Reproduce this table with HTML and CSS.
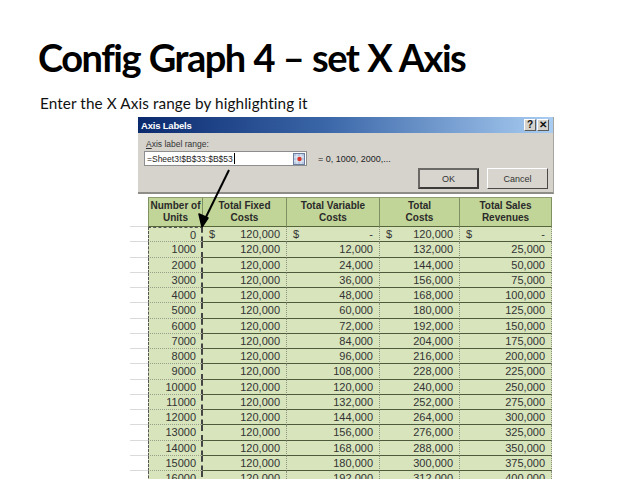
FILE: index.html
```html
<!DOCTYPE html>
<html>
<head>
<meta charset="utf-8">
<link rel="stylesheet" href="styles.css">
</head>
<body>
<div class="slide">
  <h1 class="title">Config Graph 4 – set X Axis</h1>
  <p class="sub">Enter the X Axis range by highlighting it</p>
  <div class="figure">
    <div class="dialog">
      <div class="titlebar">
        <span class="tb-text">Axis Labels</span>
        <span class="tb-btns"><span class="tb-btn">?</span><span class="tb-btn">✕</span></span>
      </div>
      <div class="dbody">
        <div class="label"><u>A</u>xis label range:</div>
        <div class="inrow">
          <div class="input"><span class="intext">=Sheet3!$B$33:$B$53</span><span class="caret"></span>
            <span class="pick"><svg width="12" height="12" viewBox="0 0 12 12"><rect x="0.5" y="0.5" width="11" height="11" fill="#b9c9e4" stroke="#6d7f9f"/><path d="M1 4h10M1 8h10M4 1v10M8 1v10" stroke="#e8eef8" stroke-width="1"/><circle cx="6.5" cy="6" r="2.2" fill="#d8352a"/></svg></span>
          </div>
          <span class="preview">= 0, 1000, 2000,...</span>
        </div>
        <div class="btnrow">
          <span class="btn default">OK</span>
          <span class="btn">Cancel</span>
        </div>
      </div>
    </div>
    <div class="sheet">
      <div class="g"></div><div class="h hf">Number of<br>Units</div><div class="h">Total Fixed<br>Costs</div><div class="h">Total Variable<br>Costs</div><div class="h">Total<br>Costs</div><div class="h">Total Sales<br>Revenues</div>
      <div class="g"></div><div class="c u first">0</div><div class="c d"><span>$</span><span>120,000</span></div><div class="c d"><span>$</span><span>-</span></div><div class="c d"><span>$</span><span>120,000</span></div><div class="c d"><span>$</span><span>-</span></div>
      <div class="g"></div><div class="c u">1000</div><div class="c">120,000</div><div class="c">12,000</div><div class="c">132,000</div><div class="c">25,000</div>
      <div class="g"></div><div class="c u">2000</div><div class="c">120,000</div><div class="c">24,000</div><div class="c">144,000</div><div class="c">50,000</div>
      <div class="g"></div><div class="c u">3000</div><div class="c">120,000</div><div class="c">36,000</div><div class="c">156,000</div><div class="c">75,000</div>
      <div class="g"></div><div class="c u">4000</div><div class="c">120,000</div><div class="c">48,000</div><div class="c">168,000</div><div class="c">100,000</div>
      <div class="g"></div><div class="c u">5000</div><div class="c">120,000</div><div class="c">60,000</div><div class="c">180,000</div><div class="c">125,000</div>
      <div class="g"></div><div class="c u">6000</div><div class="c">120,000</div><div class="c">72,000</div><div class="c">192,000</div><div class="c">150,000</div>
      <div class="g"></div><div class="c u">7000</div><div class="c">120,000</div><div class="c">84,000</div><div class="c">204,000</div><div class="c">175,000</div>
      <div class="g"></div><div class="c u">8000</div><div class="c">120,000</div><div class="c">96,000</div><div class="c">216,000</div><div class="c">200,000</div>
      <div class="g"></div><div class="c u">9000</div><div class="c">120,000</div><div class="c">108,000</div><div class="c">228,000</div><div class="c">225,000</div>
      <div class="g"></div><div class="c u">10000</div><div class="c">120,000</div><div class="c">120,000</div><div class="c">240,000</div><div class="c">250,000</div>
      <div class="g"></div><div class="c u">11000</div><div class="c">120,000</div><div class="c">132,000</div><div class="c">252,000</div><div class="c">275,000</div>
      <div class="g"></div><div class="c u">12000</div><div class="c">120,000</div><div class="c">144,000</div><div class="c">264,000</div><div class="c">300,000</div>
      <div class="g"></div><div class="c u">13000</div><div class="c">120,000</div><div class="c">156,000</div><div class="c">276,000</div><div class="c">325,000</div>
      <div class="g"></div><div class="c u">14000</div><div class="c">120,000</div><div class="c">168,000</div><div class="c">288,000</div><div class="c">350,000</div>
      <div class="g"></div><div class="c u">15000</div><div class="c">120,000</div><div class="c">180,000</div><div class="c">300,000</div><div class="c">375,000</div>
      <div class="g"></div><div class="c u">16000</div><div class="c">120,000</div><div class="c">192,000</div><div class="c">312,000</div><div class="c">400,000</div>
    </div>
    <svg class="arrow" width="120" height="120" viewBox="0 0 120 120">
      <path d="M99 53 L75 102" stroke="#000" stroke-width="2" fill="none"/>
      <path d="M72 110 L69 97 L78 101 Z" fill="#000" stroke="#000" stroke-width="1.5" stroke-linejoin="round"/>
    </svg>
  </div>
</div>
</body>
</html>
```

FILE: styles.css
```css
html, body {
  margin: 0;
  padding: 0;
  background: #fff;
}
body {
  width: 638px;
  height: 479px;
  overflow: hidden;
  font-family: Lato, "Liberation Sans", sans-serif;
}
.slide {
  display: flex;
  flex-direction: column;
}
.title {
  margin: 0;
  padding: 34px 0 0 38px;
  font-family: Lato, sans-serif;
  font-weight: 700;
  font-size: 38px;
  letter-spacing: -1.5px;
  word-spacing: 1px;
  line-height: 47px;
  color: #000;
}
.sub {
  margin: 0;
  padding: 13px 0 0 40px;
  font-size: 15.3px;
  line-height: 18px;
  letter-spacing: 0.1px;
  color: #111;
}
.figure {
  position: relative;
  margin: 5px 0 0 130px;
  width: 430px;
}
.dialog {
  margin-left: 8px;
  width: 416px;
  height: 77px;
  display: flex;
  flex-direction: column;
  background: #d6d3cd;
  box-sizing: border-box;
  border-bottom: 2px solid #8f8d88;
  border-right: 1px solid #a8a6a0;
  font-family: "Liberation Sans", sans-serif;
}
.titlebar {
  height: 16px;
  flex: none;
  display: flex;
  align-items: center;
  justify-content: space-between;
  padding: 0 4px 0 3px;
  background: linear-gradient(to right, #0b2a6e 0%, #3a66a8 45%, #a9cdf2 100%);
}
.tb-text {
  color: #fff;
  font-weight: 700;
  font-size: 9.5px;
  letter-spacing: -0.2px;
}
.tb-btns {
  display: flex;
  gap: 1px;
}
.tb-btn {
  width: 12px;
  height: 12px;
  box-sizing: border-box;
  background: #d6d3cd;
  border: 1px solid #fff;
  border-right-color: #5e5c58;
  border-bottom-color: #5e5c58;
  font-size: 10px;
  line-height: 10px;
  font-weight: 700;
  text-align: center;
  color: #111;
}
.dbody {
  flex: 1;
  display: flex;
  flex-direction: column;
  padding: 5px 5px 0 6px;
}
.label {
  font-size: 8.5px;
  line-height: 12px;
  color: #333;
  padding-left: 2px;
}
.inrow {
  margin-top: 1px;
  display: flex;
  align-items: center;
  gap: 11px;
}
.input {
  width: 163px;
  height: 15px;
  box-sizing: border-box;
  background: #fff;
  border: 1px solid #8e8e8e;
  display: flex;
  align-items: center;
  padding-left: 2px;
  font-size: 8.5px;
  color: #222;
}
.caret {
  width: 1px;
  height: 11px;
  background: #000;
  margin-left: 1px;
}
.pick {
  margin-left: auto;
  margin-right: 1px;
  display: flex;
}
.preview {
  font-size: 9px;
  color: #222;
}
.btnrow {
  margin-top: 2px;
  display: flex;
  justify-content: flex-end;
  gap: 8px;
}
.btn {
  width: 61px;
  height: 21px;
  box-sizing: border-box;
  border: 1px solid #fff;
  border-right-color: #4a4846;
  border-bottom-color: #4a4846;
  background: #d8d5cf;
  font-size: 9px;
  color: #333;
  display: flex;
  align-items: center;
  justify-content: center;
}
.btn.default {
  border: 2px solid #3c3b39;
  border-top-color: #6a6965;
  border-left-color: #6a6965;
}
.sheet {
  margin-top: 3px;
  display: grid;
  grid-template-columns: 18px 55px 84px 93px 80px 92px;
  grid-template-rows: 30px;
  grid-auto-rows: 15.27px;
  font-family: "Liberation Sans", Arial, sans-serif;
}
.g {
  border-bottom: 1px solid #dadada;
}
.h {
  background: #c2d598;
  border-top: 1px solid #8e9e72;
  border-right: 1px solid #7f9062;
  border-bottom: 1px solid #56663a;
  font-size: 10px;
  font-weight: 700;
  line-height: 12px;
  color: #2a2a2a;
  text-align: center;
  display: flex;
  align-items: center;
  justify-content: center;
}
.h.hf {
  border-left: 1px solid #7f9062;
}
.c {
  background: #d7e4bc;
  border-bottom: 1px solid #4e5a3c;
  border-right: 1px dotted #8c9180;
  font-size: 11px;
  line-height: 14px;
  color: #333;
  text-align: right;
  padding: 0 6px;
  box-sizing: border-box;
  white-space: nowrap;
}
.c.d {
  display: flex;
  justify-content: space-between;
}
.c.u {
  border-left: 1px dashed #555;
  border-right: 2px dashed #444;
  border-bottom: 1px dotted #9a9f8a;
  padding-right: 5px;
}
.c.u.first {
  border-top: 1px dashed #555;
}
.arrow {
  position: absolute;
  left: 0;
  top: 0;
  pointer-events: none;
}
```
